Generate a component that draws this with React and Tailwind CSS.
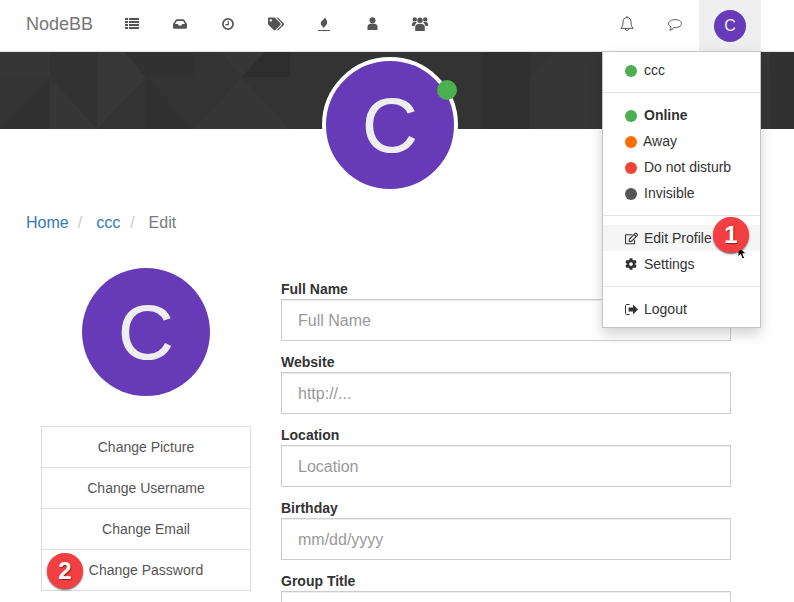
import React from 'react';
import { FaInbox, FaTags, FaRegEdit, FaCog } from 'react-icons/fa';

const ListIcon = () => (
  <svg width="14" height="11" viewBox="0 0 14 11" fill="currentColor">
    <path d="M0 0h3v2H0zM4 0h10v2H4zM0 3h3v2H0zM4 3h10v2H4zM0 6h3v2H0zM4 6h10v2H4zM0 9h3v2H0zM4 9h10v2H4z" />
  </svg>
);

const ClockIcon = () => (
  <svg width="12" height="12" viewBox="0 0 12 12" fill="none" stroke="currentColor">
    <circle cx="6" cy="6" r="5.1" strokeWidth="1.7" />
    <path d="M6.3 2.8V6.6H3.4" strokeWidth="1.1" />
  </svg>
);

const FlameIcon = () => (
  <svg width="12" height="14" viewBox="0 0 12 14" fill="currentColor">
    <path d="M7 0C7.4 2 9.6 3.6 9.2 6C8.9 8 7 9 5.4 11C5.4 9.4 2.8 8.8 2.8 6.2C2.8 3.8 6.4 2.6 7 0Z" />
    <rect x="0" y="13" width="12" height="1" />
  </svg>
);

const UserIcon = () => (
  <svg width="11" height="13" viewBox="0 0 11 13" fill="currentColor">
    <circle cx="5.5" cy="3.2" r="3" />
    <path d="M0.5 13V9.5C0.5 7.5 2.5 6.5 5.5 6.5S10.5 7.5 10.5 9.5V13Z" />
  </svg>
);

const UsersIcon = () => (
  <svg width="16" height="14" viewBox="0 0 16 14" fill="currentColor">
    <circle cx="2.8" cy="2.4" r="2.2" />
    <circle cx="13.2" cy="2.4" r="2.2" />
    <circle cx="8" cy="3.2" r="2.7" />
    <path d="M3.2 14V10C3.2 8 5.4 6.8 8 6.8S12.8 8 12.8 10V14Z" />
    <path d="M0 9V7C0 5.6 1.4 5 2.8 5H4.6L2.4 9Z" />
    <path d="M16 9V7C16 5.6 14.6 5 13.2 5H11.4L13.6 9Z" />
  </svg>
);

const BellIcon = () => (
  <svg width="14" height="16" viewBox="0 0 14 16" fill="none" stroke="currentColor" strokeWidth="1">
    <path d="M7 1.6C4.4 1.6 3 3.4 3 6C3 9 2.4 10.8 0.8 12.4H13.2C11.6 10.8 11 9 11 6C11 3.4 9.6 1.6 7 1.6Z" />
    <path d="M7 0V1.6M5.4 12.6C5.4 15.2 8.6 15.2 8.6 12.6" />
  </svg>
);

const CommentIcon = () => (
  <svg width="14" height="12" viewBox="0 0 14 12" fill="none" stroke="currentColor" strokeWidth="1">
    <path d="M7 0.6C3.4 0.6 0.5 2.3 0.5 4.6C0.5 6 1.6 7.2 3 8C3 9 2.6 10.4 1.8 11.2C3.6 11 5 10 5.8 8.6C9.8 9 13.5 7.2 13.5 4.6C13.5 2.3 10.6 0.6 7 0.6Z" />
  </svg>
);

const LogoutIcon = () => (
  <svg width="13" height="11" viewBox="0 0 13 11" fill="currentColor">
    <path d="M4.5 0.5H2C1 0.5 0.5 1 0.5 2V9C0.5 10 1 10.5 2 10.5H4.5" fill="none" stroke="currentColor" />
    <path d="M8 0.6L13 5.5L8 10.4V7.5H3.6V3.5H8Z" />
  </svg>
);

const CursorIcon = ({ className }) => (
  <svg className={className} width="12" height="16" viewBox="0 0 12 16">
    <path d="M1 1V12L3.6 9.6L5.4 14L7.6 13L5.8 8.8H9.4Z" fill="#000000" stroke="#ffffff" strokeWidth="1" />
  </svg>
);

const navIcons = [
  <ListIcon />,
  <FaInbox size={14} />,
  <ClockIcon />,
  <FaTags size={16} />,
  <FlameIcon />,
  <UserIcon />,
  <UsersIcon />,
];

const statuses = [
  { label: 'Online', color: 'bg-[#4caf50]', bold: true },
  { label: 'Away', color: 'bg-[#ff6d00]', gap: 'gap-[6px]' },
  { label: 'Do not disturb', color: 'bg-[#f44336]' },
  { label: 'Invisible', color: 'bg-[#555555]' },
];

const fields = [
  { label: 'Full Name', placeholder: 'Full Name' },
  { label: 'Website', placeholder: 'http://...' },
  { label: 'Location', placeholder: 'Location' },
  { label: 'Birthday', placeholder: 'mm/dd/yyyy' },
  { label: 'Group Title', placeholder: '' },
];

const actions = ['Change Picture', 'Change Username', 'Change Email', 'Change Password'];

// subtle triangle pattern of the cover
const CoverPattern = () => (
  <svg className="absolute inset-0 w-full h-full" viewBox="0 0 794 77" preserveAspectRatio="none">
    <rect width="794" height="77" fill="#333333" />
    <path d="M0 0H50V25H0Z" fill="#363636" />
    <path d="M0 77L50 25V77Z" fill="#313131" />
    <path d="M50 25L97 77H50Z" fill="#363636" />
    <path d="M50 0H97V77L50 25Z" fill="#323232" />
    <path d="M97 0H125L146 25L97 77Z" fill="#373737" />
    <path d="M125 0H194V25H146Z" fill="#313131" />
    <path d="M146 25L194 77H146Z" fill="#313131" />
    <path d="M194 77L242 25L290 77Z" fill="#363636" />
    <path d="M220 0L242 25L265 0Z" fill="#363636" />
    <path d="M242 25L265 0H290V25Z" fill="#2e2e2e" />
    <path d="M482 0H530V77H482Z" fill="#303030" />
    <path d="M530 25L552 0H602V77H530Z" fill="#353535" />
    <path d="M761 0H770V77H761Z" fill="#373737" />
    <path d="M770 0H794V77H770Z" fill="#313131" />
  </svg>
);

const Dot = ({ color }) => <span className={`w-3 h-3 mt-[2px] rounded-full shrink-0 ${color}`} />;

const Badge = ({ children, className }) => (
  <span className={`absolute w-[36px] h-[36px] rounded-full bg-[#f43f42] text-white text-[24px] font-bold leading-none flex items-center justify-center shadow-[0_1px_2px_rgba(0,0,0,0.6)] [text-shadow:1px_1px_1px_rgba(0,0,0,0.45)] ${className}`}>
    {children}
  </span>
);

const UserMenu = () => (
  <div className="absolute left-[602px] top-[51px] w-[159px] h-[277px] bg-white border border-[#c4c4c4] shadow-[0_6px_12px_rgba(0,0,0,0.175)] text-[14px] text-[#333333] z-20">
    <div className="h-[40px] flex items-center gap-[7px] pl-[22px] pb-[4px]">
      <Dot color="bg-[#4caf50]" />
      <span>ccc</span>
    </div>
    <div className="h-px bg-[#e5e5e5]" />
    <div className="py-[9px]">
      {statuses.map((s) => (
        <div key={s.label} className={`h-[26px] flex items-center pl-[22px] ${s.gap || 'gap-[7px]'}`}>
          <Dot color={s.color} />
          <span className={s.bold ? 'font-bold' : ''}>{s.label}</span>
        </div>
      ))}
    </div>
    <div className="h-px bg-[#e5e5e5]" />
    <div className="py-[9px]">
      <div className="h-[26px] flex items-center gap-[7px] pl-[21px] bg-[#f5f5f5]">
        <FaRegEdit size={13} className="mr-[-1px] ml-[1px]" />
        <span>Edit Profile</span>
      </div>
      <div className="h-[26px] flex items-center gap-[7px] pl-[22px]">
        <FaCog size={12} />
        <span>Settings</span>
      </div>
    </div>
    <div className="h-px bg-[#e5e5e5]" />
    <div className="pt-[9px]">
      <div className="h-[26px] flex items-center gap-[6px] pl-[22px]">
        <LogoutIcon />
        <span>Logout</span>
      </div>
    </div>
    <CursorIcon className="absolute left-[134px] top-[193px]" />
    <Badge className="left-[110px] top-[165px]">1</Badge>
  </div>
);

export default function App() {
  return (
    <div className="relative w-[794px] h-[602px] overflow-hidden bg-white font-['Liberation_Sans',sans-serif] text-[#333333]">
      {/* Navbar */}
      <nav className="h-[52px] flex items-stretch border-b border-[#e7e7e7] bg-white">
        <div className="pl-[26px] w-[108px] text-[18px] text-[#777777] flex items-center pb-[2px]">NodeBB</div>
        <div className="flex">
          {navIcons.map((icon, i) => (
            <div key={i} className="w-[48px] flex items-center justify-center pb-[4px] text-[#555555]">
              {icon}
            </div>
          ))}
        </div>
        <div className="ml-auto flex mr-[33px]">
          <div className="w-[49px] flex items-center justify-center pb-[4px] text-[#555555]"><BellIcon /></div>
          <div className="w-[48px] flex items-center justify-center pb-[2px] text-[#555555]"><CommentIcon /></div>
          <div className="w-[62px] bg-[#eeeeee] flex items-center justify-center">
            <div className="w-[32px] h-[32px] rounded-full bg-[#673ab7] text-[#eeeeee] text-[16px] flex items-center justify-center">C</div>
          </div>
        </div>
      </nav>

      {/* Cover */}
      <div className="relative h-[77px] overflow-hidden">
        <CoverPattern />
      </div>

      {/* Cover avatar */}
      <div className="absolute left-[322px] top-[57px] w-[136px] h-[136px] rounded-full border-4 border-white bg-[#673ab7] text-[#eeeeee] text-[78px] flex items-center justify-center z-10">
        C
      </div>
      <span className="absolute left-[437px] top-[80px] w-5 h-5 rounded-full bg-[#4caf50] z-10" />

      <UserMenu />

      {/* Breadcrumb */}
      <div className="mt-[83px] pl-[26px] flex items-center text-[16px] h-[22px]">
        <span className="text-[#337ab7]">Home</span>
        <span className="text-[#cccccc] ml-[9px] mr-[14px]">/</span>
        <span className="text-[#337ab7]">ccc</span>
        <span className="text-[#cccccc] ml-[10px] mr-[14px]">/</span>
        <span className="text-[#777b80]">Edit</span>
      </div>

      {/* Content */}
      <div className="flex gap-[30px] pl-[41px] mt-[34px]">
        <div className="w-[210px] shrink-0">
          <div className="w-[128px] h-[128px] mx-auto rounded-full bg-[#673ab7] text-[#eeeeee] text-[78px] flex items-center justify-center">C</div>
          <div className="relative mt-[30px] border border-[#dddddd] border-b-0 text-[14px] text-[#555555]">
            {actions.map((a) => (
              <div key={a} className="h-[41px] flex items-center justify-center border-b border-[#dddddd]">{a}</div>
            ))}
            <Badge className="left-[5px] top-[126px]">2</Badge>
          </div>
        </div>
        <div className="w-[450px] pt-[12px]">
          {fields.map((f) => (
            <div key={f.label} className="mb-[12px]">
              <label className="block text-[14px] font-bold h-[19px] leading-[18px]">{f.label}</label>
              <input
                readOnly
                placeholder={f.placeholder}
                className="block w-full h-[42px] px-4 pt-[2px] text-[16px] border border-[#cccccc] bg-white shadow-[inset_0_1px_1px_rgba(0,0,0,0.075)] placeholder:text-[#999999] outline-none"
              />
            </div>
          ))}
        </div>
      </div>
    </div>
  );
}
